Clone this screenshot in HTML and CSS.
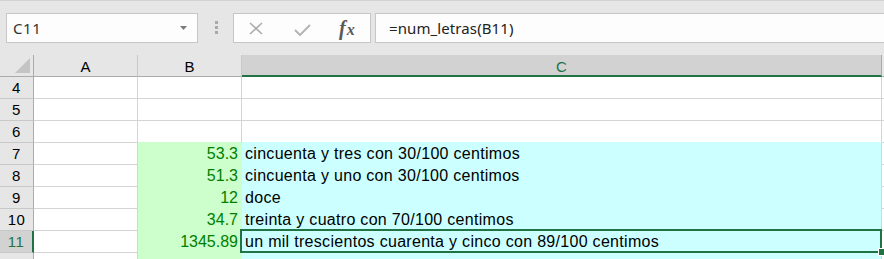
FILE: index.html
```html
<!DOCTYPE html>
<html>
<head>
<meta charset="utf-8">
<link rel="stylesheet" href="styles.css">
</head>
<body>
<div class="app">
  <div class="toolbar">
    <div class="namebox">
      <span class="nb-text">C11</span>
      <svg class="caret" width="7" height="4" viewBox="0 0 7 4"><polygon points="0,0 7,0 3.5,4" fill="#7a7a7a"/></svg>
    </div>
    <div class="grip"><i></i><i></i><i></i></div>
    <div class="fbuttons">
      <svg class="ic-x" width="14" height="13" viewBox="0 0 14 13"><path d="M1 1 L13 12 M13 1 L1 12" stroke="#ababab" stroke-width="1.6" fill="none"/></svg>
      <svg class="ic-ok" width="17" height="12" viewBox="0 0 17 12"><path d="M1 6 L6 11 L16 1" stroke="#b4b4b4" stroke-width="2" fill="none"/></svg>
      <span class="fx"><span class="fx-f">f</span><span class="fx-x">x</span></span>
    </div>
    <div class="formula">=num_letras(B11)</div>
  </div>

  <div class="sheet">
    <div class="corner"><svg width="15" height="15" viewBox="0 0 15 15"><polygon points="15,0 15,15 0,15" fill="#c4c4c4"/></svg></div>
    <div class="ch">A</div>
    <div class="ch">B</div>
    <div class="ch ch-sel">C</div>
    <div class="ch ch-d"></div>

    <div class="rh">4</div><div class="c"></div><div class="c"></div><div class="c"></div><div class="c"></div>
    <div class="rh">5</div><div class="c"></div><div class="c"></div><div class="c"></div><div class="c"></div>
    <div class="rh">6</div><div class="c"></div><div class="c top-g"></div><div class="c top-b"></div><div class="c"></div>

    <div class="rh">7</div><div class="c"></div><div class="c g num">53.3</div><div class="c b">cincuenta y tres con 30/100 centimos</div><div class="c"></div>
    <div class="rh">8</div><div class="c"></div><div class="c g num">51.3</div><div class="c b">cincuenta y uno con 30/100 centimos</div><div class="c"></div>
    <div class="rh">9</div><div class="c"></div><div class="c g num">12</div><div class="c b">doce</div><div class="c"></div>
    <div class="rh">10</div><div class="c"></div><div class="c g num">34.7</div><div class="c b">treinta y cuatro con 70/100 centimos</div><div class="c"></div>
    <div class="rh rh-sel">11</div><div class="c"></div><div class="c g num">1345.89</div><div class="c b active">un mil trescientos cuarenta y cinco con 89/100 centimos</div><div class="c"></div>
    <div class="rh">12</div><div class="c"></div><div class="c g"></div><div class="c b"></div><div class="c"></div>
  </div>
</div>
</body>
</html>
```

FILE: styles.css
```css
html, body {
  margin: 0;
  padding: 0;
  background: #ffffff;
}
body {
  width: 884px;
  height: 259px;
  overflow: hidden;
}
.app {
  width: 884px;
  height: 259px;
  overflow: hidden;
}
.toolbar {
  box-sizing: border-box;
  height: 55px;
  background: #e6e6e6;
  border-top: 1px solid #d2d2d2;
  display: flex;
  align-items: flex-start;
  padding-top: 12px;
  font-family: "Noto Sans", "Open Sans", sans-serif;
  font-size: 14px;
  color: #262626;
}
.namebox {
  box-sizing: border-box;
  margin-left: 6px;
  width: 192px;
  height: 30px;
  background: #fdfdfd;
  border: 1px solid #c6c6c6;
  display: flex;
  align-items: center;
  padding-left: 6px;
  padding-right: 10px;
}
.nb-text {
  flex: 1;
  font-size: 15px;
  letter-spacing: 0.6px;
  color: #333;
}
.caret {
  display: block;
}
.grip {
  margin-left: 17px;
  margin-top: 8px;
  width: 4px;
  display: flex;
  flex-direction: column;
  gap: 2px;
}
.grip i {
  display: block;
  width: 3px;
  height: 3px;
  background: #a9a9a9;
}
.fbuttons {
  box-sizing: border-box;
  margin-left: 14px;
  width: 138px;
  height: 30px;
  background: #fdfdfd;
  border: 1px solid #c6c6c6;
  display: flex;
  align-items: center;
  padding-left: 15px;
}
.ic-x {
  display: block;
  margin-top: 1px;
}
.ic-ok {
  display: block;
  margin-left: 31px;
  margin-top: 3px;
}
.fx {
  margin-left: 28px;
  font-family: "Liberation Serif", "DejaVu Serif", serif;
  font-style: italic;
  font-weight: bold;
  color: #595959;
  display: flex;
  align-items: baseline;
}
.fx-f {
  font-size: 20px;
}
.fx-x {
  font-size: 16px;
  margin-left: 1px;
}
.formula {
  box-sizing: border-box;
  margin-left: 4px;
  flex: 1;
  margin-right: -10px;
  height: 30px;
  background: #fdfdfd;
  border: 1px solid #c6c6c6;
  display: flex;
  align-items: center;
  padding-left: 13px;
  font-size: 15px;
  letter-spacing: 0.1px;
  color: #222;
}

.sheet {
  display: grid;
  grid-template-columns: 34px 104px 104px 640px 1fr;
  grid-auto-rows: 22px;
  font-family: "Liberation Sans", Arial, sans-serif;
  font-size: 15px;
  color: #000;
}
.sheet > div {
  box-sizing: border-box;
  line-height: 21px;
  white-space: nowrap;
  overflow: visible;
}
.corner {
  background: #e6e6e6;
  border-right: 1px solid #ababab;
  border-bottom: 1px solid #ababab;
  display: flex;
  align-items: flex-end;
  justify-content: flex-end;
  padding: 0 3px 3px 0;
}
.corner svg {
  display: block;
}
.ch {
  background: #e6e6e6;
  border-right: 1px solid #c8c8c8;
  border-bottom: 1px solid #ababab;
  text-align: center;
  padding-top: 1px;
}
.ch-sel {
  background: #d2d2d2;
  color: #217346;
  border-right-color: #ababab;
  border-bottom: 2px solid #217346;
}
.ch-d {
  border-right: none;
}
.rh {
  background: #e6e6e6;
  border-right: 1px solid #ababab;
  border-bottom: 1px solid #c8c8c8;
  text-align: center;
  letter-spacing: 0.5px;
}
.rh-sel {
  background: #d2d2d2;
  color: #217346;
  border-right: 2px solid #217346;
}
.sheet > .c {
  border-right: 1px solid #d4d4d4;
  border-bottom: 1px solid #d4d4d4;
  padding: 0 3px;
  font-size: 16px;
  line-height: 22px;
  letter-spacing: 0.3px;
}
.sheet > .top-g {
  border-bottom-color: #ccffcc;
}
.sheet > .top-b {
  border-bottom-color: #ccffff;
}
.sheet > .g {
  background: #ccffcc;
  border-right-color: #ccffcc;
  border-bottom-color: #ccffcc;
}
.sheet > .b {
  background: #ccffff;
  border-bottom-color: #ccffff;
}
.sheet > .num {
  text-align: right;
  color: #008000;
  padding-right: 3px;
  letter-spacing: 0;
}
.active {
  position: relative;
}
.active::before {
  content: "";
  position: absolute;
  left: -2px;
  top: -2px;
  right: -1px;
  bottom: -1px;
  border: 2px solid #217346;
  pointer-events: none;
}
.active::after {
  content: "";
  position: absolute;
  left: 636px;
  top: 17px;
  width: 6px;
  height: 6px;
  background: #217346;
  border: 1px solid #ffffff;
}
```
